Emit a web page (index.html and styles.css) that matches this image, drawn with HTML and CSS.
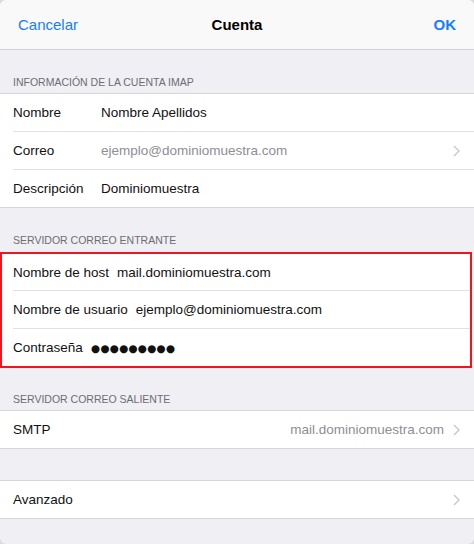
FILE: index.html
```html
<!DOCTYPE html>
<html lang="es">
<head>
    <meta charset="UTF-8">
    <meta name="viewport" content="width=device-width, initial-scale=1.0">
    <title>Cuenta</title>
    <link rel="stylesheet" href="styles.css">
</head>
<body>
    <div class="sheet">
        <div class="navbar">
            <span class="nav-btn">Cancelar</span>
            <span class="nav-title">Cuenta</span>
            <span class="nav-btn nav-ok">OK</span>
        </div>

        <div class="section-header">INFORMACIÓN DE LA CUENTA IMAP</div>
        <div class="group">
            <div class="row"><span class="label fixed">Nombre</span><span class="value">Nombre Apellidos</span></div>
            <div class="row"><span class="label fixed">Correo</span><span class="value muted">ejemplo@dominiomuestra.com</span>
                <svg class="chevron" width="7" height="12" viewBox="0 0 7 12"><polyline points="1,1 6,6 1,11" fill="none" stroke="#c7c7cc" stroke-width="1.4"/></svg>
            </div>
            <div class="row"><span class="label fixed">Descripción</span><span class="value">Dominiomuestra</span></div>
        </div>

        <div class="section-header">SERVIDOR CORREO ENTRANTE</div>
        <div class="group highlight">
            <div class="row"><span class="label">Nombre de host</span><span class="value">mail.dominiomuestra.com</span></div>
            <div class="row"><span class="label">Nombre de usuario</span><span class="value">ejemplo@dominiomuestra.com</span></div>
            <div class="row"><span class="label">Contraseña</span><span class="value dots">●●●●●●●●●</span></div>
        </div>

        <div class="section-header short">SERVIDOR CORREO SALIENTE</div>
        <div class="group">
            <div class="row"><span class="label">SMTP</span><span class="value muted right">mail.dominiomuestra.com</span>
                <svg class="chevron" width="7" height="12" viewBox="0 0 7 12"><polyline points="1,1 6,6 1,11" fill="none" stroke="#c7c7cc" stroke-width="1.4"/></svg>
            </div>
        </div>

        <div class="spacer"></div>
        <div class="group">
            <div class="row"><span class="label">Avanzado</span><span class="value right"></span>
                <svg class="chevron" width="7" height="12" viewBox="0 0 7 12"><polyline points="1,1 6,6 1,11" fill="none" stroke="#c7c7cc" stroke-width="1.4"/></svg>
            </div>
        </div>
    </div>
</body>
</html>
```

FILE: styles.css
```css
body {
    margin: 0;
    padding: 0;
    background-color: #d9d9de;
    font-family: "Liberation Sans", Arial, sans-serif;
}
.sheet {
    width: 474px;
    height: 544px;
    background-color: #efeff4; /* grouped table background */
    border-radius: 6px;
    overflow: hidden;
}
.navbar {
    height: 49px;
    display: flex;
    align-items: center;
    justify-content: space-between;
    padding: 0 18px;
    background-color: #f9f9f9;
    border-bottom: 1px solid #d2d2d6;
}
.nav-btn {
    color: #157efb;
    font-size: 15px;
    width: 80px;
}
.nav-ok {
    text-align: right;
    font-weight: bold;
}
.nav-title {
    font-size: 15px;
    font-weight: bold;
    color: #000;
}
.section-header {
    height: 43px;
    display: flex;
    align-items: flex-end;
    padding: 0 13px 5px;
    box-sizing: border-box;
    font-size: 10.5px;
    color: #6d6d72;
}
.section-header.short {
    height: 42px;
}
.group {
    background-color: #fff;
    border-top: 1px solid #d6d6da;
    border-bottom: 1px solid #d6d6da;
}
.row {
    height: 37px;
    display: flex;
    align-items: center;
    margin-left: 13px;
    padding-right: 14px;
    font-size: 13.5px;
    color: #111;
}
.row + .row {
    border-top: 1px solid #e1e1e4;
}
.label {
    margin-right: 8px;
    white-space: nowrap;
}
.label.fixed {
    width: 80px;
}
.value {
    flex: 1;
    white-space: nowrap;
}
.muted {
    color: #8e8e93;
}
.right {
    text-align: right;
    margin-right: 9px;
}
.dots {
    font-family: "DejaVu Sans", sans-serif;
    font-size: 10.5px;
    letter-spacing: 0.2px;
}
.highlight {
    border: 2px solid #f0141e;
    margin: 1px 2px 0 0;
}
.highlight .row {
    margin-left: 11px;
}
.highlight .row:first-child {
    height: 36px;
}
.spacer {
    height: 31px;
}
```
